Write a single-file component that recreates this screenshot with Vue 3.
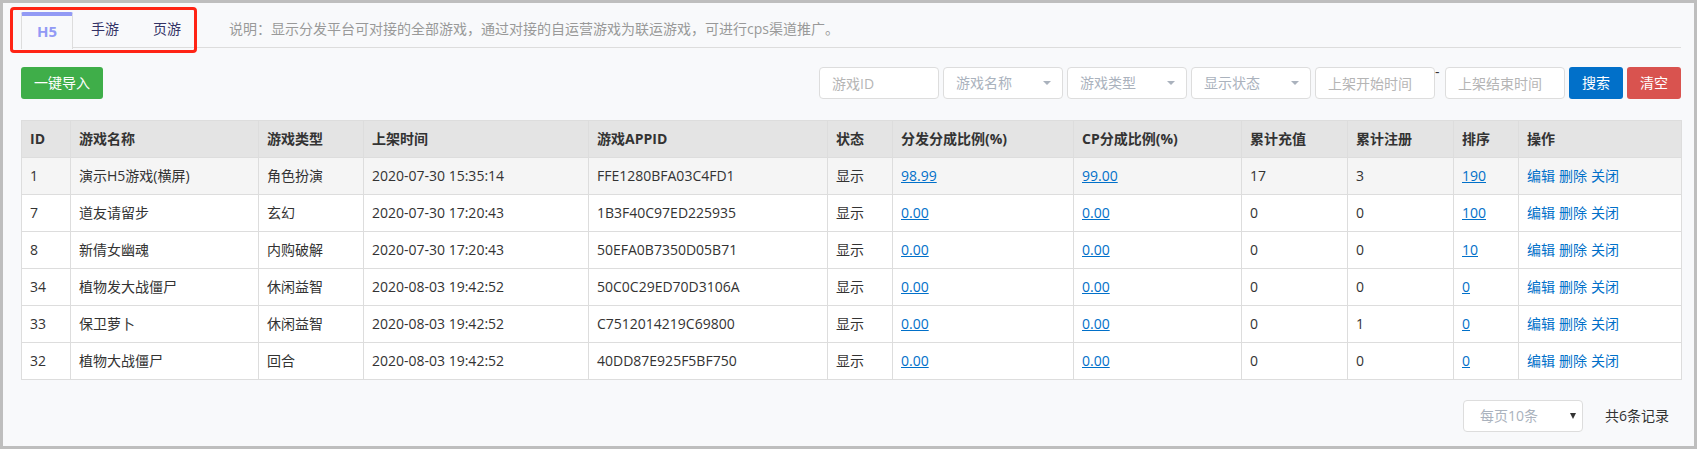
<script setup>
import { ref } from 'vue'

const tabs = ['H5', '手游', '页游']
const active = ref('H5')

const columns = [
  { title: 'ID', width: 49 },
  { title: '游戏名称', width: 188 },
  { title: '游戏类型', width: 105 },
  { title: '上架时间', width: 225 },
  { title: '游戏APPID', width: 239 },
  { title: '状态', width: 65 },
  { title: '分发分成比例(%)', width: 181 },
  { title: 'CP分成比例(%)', width: 168 },
  { title: '累计充值', width: 106 },
  { title: '累计注册', width: 106 },
  { title: '排序', width: 65 },
  { title: '操作', width: 163 },
]

const games = [
  { id: 1, name: '演示H5游戏(横屏)', type: '角色扮演', time: '2020-07-30 15:35:14', appid: 'FFE1280BFA03C4FD1', ratio: '98.99', cp: '99.00', pay: 17, reg: 3, sort: 190 },
  { id: 7, name: '道友请留步', type: '玄幻', time: '2020-07-30 17:20:43', appid: '1B3F40C97ED225935', ratio: '0.00', cp: '0.00', pay: 0, reg: 0, sort: 100 },
  { id: 8, name: '新倩女幽魂', type: '内购破解', time: '2020-07-30 17:20:43', appid: '50EFA0B7350D05B71', ratio: '0.00', cp: '0.00', pay: 0, reg: 0, sort: 10 },
  { id: 34, name: '植物发大战僵尸', type: '休闲益智', time: '2020-08-03 19:42:52', appid: '50C0C29ED70D3106A', ratio: '0.00', cp: '0.00', pay: 0, reg: 0, sort: 0 },
  { id: 33, name: '保卫萝卜', type: '休闲益智', time: '2020-08-03 19:42:52', appid: 'C7512014219C69800', ratio: '0.00', cp: '0.00', pay: 0, reg: 1, sort: 0 },
  { id: 32, name: '植物大战僵尸', type: '回合', time: '2020-08-03 19:42:52', appid: '40DD87E925F5BF750', ratio: '0.00', cp: '0.00', pay: 0, reg: 0, sort: 0 },
]

const filters = ['游戏名称', '游戏类型', '显示状态']
const actions = ['编辑', '删除', '关闭']
</script>

<template>
  <main class="page">
    <header class="head">
      <nav class="tabs">
        <a
          v-for="t in tabs"
          :key="t"
          href="#"
          class="tab"
          :class="{ active: t === active }"
          @click.prevent="active = t"
        >{{ t }}</a>
        <span class="highlight" />
      </nav>
      <p class="note">说明：显示分发平台可对接的全部游戏，通过对接的自运营游戏为联运游戏，可进行cps渠道推广。</p>
    </header>

    <div class="toolbar">
      <button type="button" class="btn green">一键导入</button>
      <form class="search" @submit.prevent>
        <input class="field" type="text" placeholder="游戏ID" aria-label="游戏ID" />
        <span v-for="f in filters" :key="f" class="pick">
          <select class="field" :aria-label="f">
            <option>{{ f }}</option>
          </select>
          <svg class="caret" width="8" height="4" viewBox="0 0 8 4"><path d="M0 0h8L4 4z" /></svg>
        </span>
        <div class="range">
          <input class="field" type="text" placeholder="上架开始时间" aria-label="上架开始时间" />
          <span class="dash">-</span>
          <input class="field" type="text" placeholder="上架结束时间" aria-label="上架结束时间" />
        </div>
        <button type="submit" class="btn blue">搜索</button>
        <button type="reset" class="btn red">清空</button>
      </form>
    </div>

    <table class="list">
      <colgroup>
        <col v-for="c in columns" :key="c.title" :style="{ width: c.width + 'px' }" />
      </colgroup>
      <thead>
        <tr>
          <th v-for="c in columns" :key="c.title">{{ c.title }}</th>
        </tr>
      </thead>
      <tbody>
        <tr v-for="g in games" :key="g.id">
          <td>{{ g.id }}</td>
          <td>{{ g.name }}</td>
          <td>{{ g.type }}</td>
          <td>{{ g.time }}</td>
          <td>{{ g.appid }}</td>
          <td>显示</td>
          <td><a href="#" class="edit">{{ g.ratio }}</a></td>
          <td><a href="#" class="edit">{{ g.cp }}</a></td>
          <td>{{ g.pay }}</td>
          <td>{{ g.reg }}</td>
          <td><a href="#" class="edit">{{ g.sort }}</a></td>
          <td>
            <div class="actions">
              <a v-for="a in actions" :key="a" href="#">{{ a }}</a>
            </div>
          </td>
        </tr>
      </tbody>
    </table>

    <footer class="pager">
      <span class="pick size">
        <select class="field" aria-label="每页条数">
          <option>每页10条</option>
        </select>
        <svg class="caret" width="6" height="6" viewBox="0 0 6 6"><path d="M0 0h6L3 6z" /></svg>
      </span>
      <span class="total">共6条记录</span>
    </footer>
  </main>
</template>

<style>
body {
  margin: 0;
}
</style>

<style scoped>
* {
  box-sizing: border-box;
}

.page {
  min-height: 100vh;
  padding: 9px 13px 14px 18px;
  border: 3px solid #bebebe;
  background: #f8f9fb;
  font-family: 'Open Sans', 'Noto Sans CJK SC', sans-serif;
  font-size: 14px;
  line-height: 20px;
  color: #333;
}

a {
  color: #0170c9;
  text-decoration: none;
}

/* tabs */
.head {
  display: flex;
  height: 36px;
  border-bottom: 1px solid #ddd;
}

.tabs {
  position: relative;
  display: flex;
  gap: 2px;
}

.tab {
  height: 36px;
  padding: 7px 16px;
  color: #336;
}

.tab.active {
  height: 37px;
  padding: 5px 15px;
  border: 1px solid #ddd;
  border-top: 4px solid #929af5;
  border-bottom: 0;
  border-radius: 2px 2px 0 0;
  background: #f8f9fb;
  font-weight: 700;
  font-size: 15px;
  color: #929af5;
}

/* red frame around the tab group */
.highlight {
  position: absolute;
  inset: -5px 0 -6px -11px;
  border: 3px solid #ff2415;
  border-radius: 4px;
  pointer-events: none;
}

.note {
  margin: 0;
  padding: 7px 0 0 32px;
  color: #999;
}

/* toolbar */
.toolbar {
  display: flex;
  justify-content: space-between;
  align-items: center;
  margin: 19px 0 21px;
}

.search {
  display: flex;
  gap: 4px;
}

.field {
  width: 120px;
  height: 32px;
  padding: 0 12px;
  border: 1px solid #ddd;
  border-radius: 4px;
  background: #fff;
  font: inherit;
  color: #aab2bd;
  appearance: none;
}

.field::placeholder {
  color: #b5b5b5;
  opacity: 1;
}

.pick {
  position: relative;
  display: block;
}

.pick .field {
  display: block;
}

.caret {
  position: absolute;
  top: 14px;
  right: 12px;
  fill: #aab2bd;
  pointer-events: none;
}

.range {
  display: flex;
}

.dash {
  width: 10px;
  line-height: 10px;
}

.btn {
  height: 32px;
  padding: 0 13px;
  border: 0;
  border-radius: 3px;
  font: inherit;
  color: #fff;
  cursor: pointer;
}

.green {
  background: #3fae49;
}

.blue {
  background: #0170c9;
}

.red {
  background: #d9534f;
}

/* table */
.list {
  width: 100%;
  table-layout: fixed;
  border-collapse: collapse;
  background: #fff;
}

.list th,
.list td {
  height: 37px;
  padding: 0 8px;
  border: 1px solid #ddd;
  text-align: left;
  white-space: nowrap;
}

.list th {
  background: #e4e4e4;
  font-weight: 700;
}

.list tbody tr:first-child {
  background: #f5f5f5;
}

.edit {
  text-decoration: underline;
}

.actions {
  display: flex;
  gap: 4px;
}

/* pager */
.pager {
  display: flex;
  justify-content: flex-end;
  align-items: center;
  gap: 22px;
  margin-top: 20px;
  padding-right: 12px;
}

.size .field {
  padding: 0 16px;
}

.size .caret {
  top: 13px;
  right: 7px;
  fill: #333;
}
</style>
